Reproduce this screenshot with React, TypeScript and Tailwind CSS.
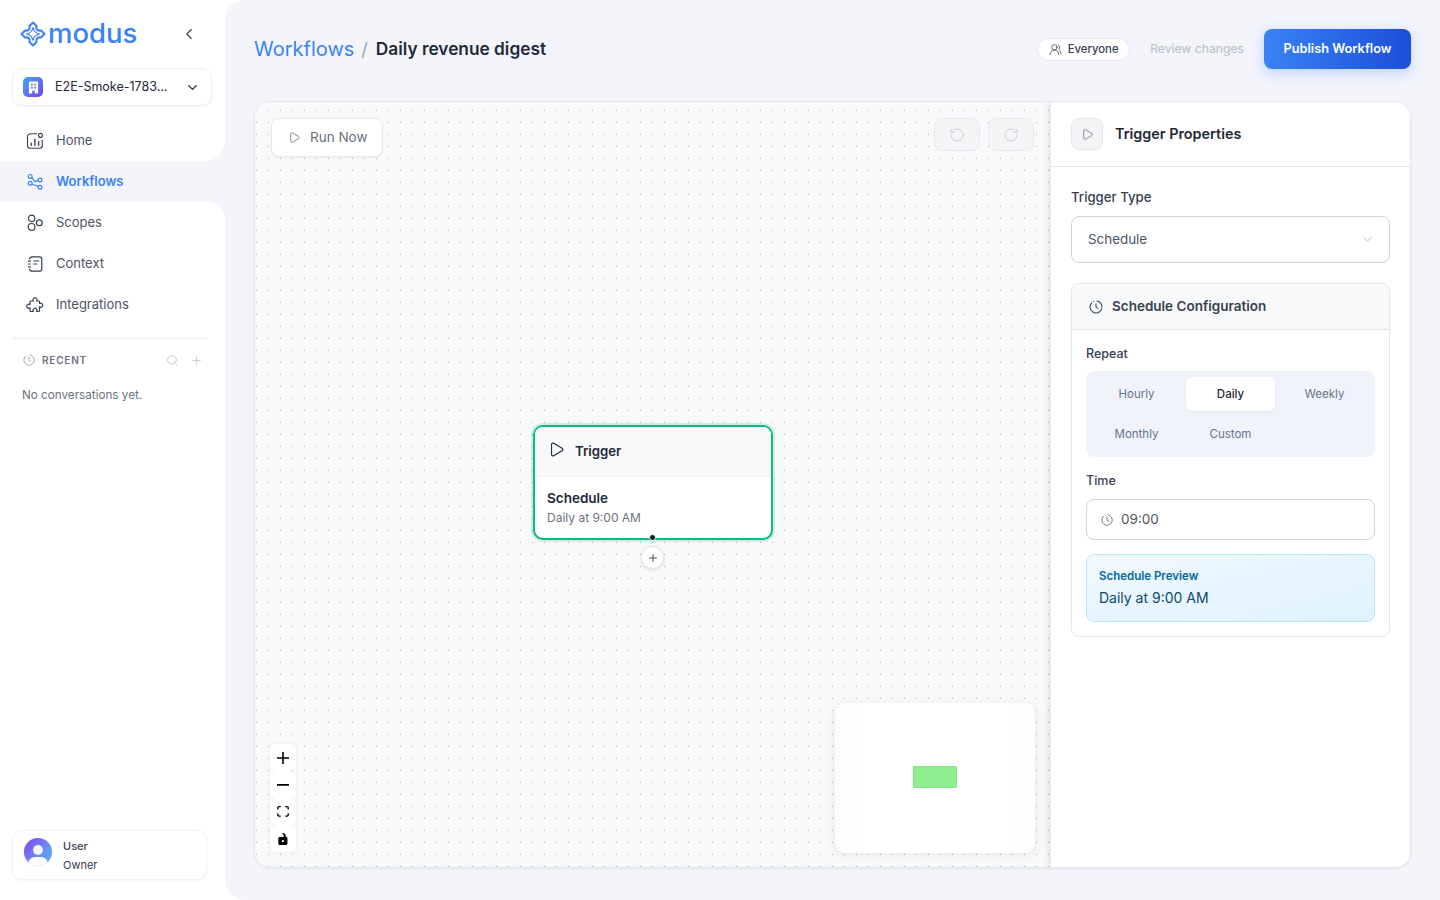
import { ChevronDown, ChevronLeft, Play, Plus, RotateCcw, RotateCw, Search, UsersRound } from "lucide-react";
import type { ReactNode } from "react";

function ClockMark({ className }: { className?: string }) {
  return (
    <svg viewBox="0 0 24 24" fill="none" stroke="currentColor" strokeWidth="1.6" strokeLinecap="round" strokeLinejoin="round" className={className}>
      <path d="M13.5 3.1A9 9 0 1 1 5.6 5.7" />
      <path d="M12 7v5.2l3 1.8" />
      <path d="M8.6 3.7l.1.1" />
    </svg>
  );
}

function ModusLogo() {
  return (
    <svg viewBox="0 0 26 26" fill="none" className="h-[26px] w-[26px] text-[#3b82f6]" stroke="currentColor" strokeLinejoin="round" strokeLinecap="round">
      <path d="M13 1.500L16.500 5Q15.600 10.400 21 9.500L24.500 13L21 16.500Q15.600 15.600 16.500 21L13 24.500L9.500 21Q10.400 15.600 5 16.500L1.500 13L5 9.500Q10.400 10.400 9.500 5Z" strokeWidth="2.100" />
      <path d="M13 6.500c.7 3.500 3 5.800 6.500 6.500-3.500.7-5.800 3-6.500 6.500-.7-3.500-3-5.800-6.500-6.500 3.500-.7 5.800-3 6.500-6.500z" strokeWidth="1.200" />
    </svg>
  );
}

function BuildingBadge() {
  return (
    <div className="flex h-5 w-5 items-center justify-center rounded-[5px] bg-gradient-to-br from-[#38a3f5] to-[#6d3df5]">
      <svg viewBox="0 0 12 14" className="h-[13px] w-[11px]">
        <path d="M1 1.5A1 1 0 0 1 2 .5h8a1 1 0 0 1 1 1v12H7.4v-3H4.6v3H1z" fill="#fff" />
        <rect x="3.2" y="2.8" width="2" height="2" fill="#6d7cf5" />
        <rect x="6.8" y="2.8" width="2" height="2" fill="#6d7cf5" />
        <rect x="3.2" y="6.2" width="2" height="2" fill="#6d7cf5" />
        <rect x="6.8" y="6.2" width="2" height="2" fill="#6d7cf5" />
      </svg>
    </div>
  );
}

function HomeIcon() {
  return (
    <svg viewBox="0 0 18 18" fill="none" stroke="currentColor" strokeWidth="1.1" strokeLinecap="round" className="h-[18px] w-[18px]">
      <path d="M10.5 1.800H4.200A2.700 2.700 0 0 0 1.500 4.500v9a2.700 2.700 0 0 0 2.700 2.700h9.400a2.700 2.700 0 0 0 2.700-2.700V8" />
      <circle cx="14.400" cy="3.400" r="2" />
      <path d="M5.200 13.200v-2M8.900 13.200V7.400M12.600 13.200V9.600" strokeWidth="1.400" />
    </svg>
  );
}

function FlowIcon() {
  return (
    <svg viewBox="0 0 18 18" fill="none" stroke="currentColor" strokeWidth="1.2" className="h-[18px] w-[18px]">
      <circle cx="4.200" cy="3.400" r="1.900" />
      <circle cx="4.200" cy="10.200" r="1.900" />
      <circle cx="14" cy="7" r="1.900" />
      <circle cx="14" cy="14.200" r="1.900" />
      <path d="M5.700 4.600l3.200 4.200 3.300-1.400M5.900 11l6.300 2.500" />
    </svg>
  );
}

function ScopesIcon() {
  return (
    <svg viewBox="0 0 18 18" fill="none" stroke="currentColor" strokeWidth="1.2" className="h-[18px] w-[18px]">
      <circle cx="5.600" cy="4.400" r="3.200" />
      <circle cx="5.600" cy="12.900" r="3.400" />
      <circle cx="13.300" cy="8.800" r="2.900" />
    </svg>
  );
}

function ContextIcon() {
  return (
    <svg viewBox="0 0 18 18" fill="none" stroke="currentColor" strokeWidth="1.2" strokeLinecap="round" className="h-[18px] w-[18px]">
      <path d="M3.600 3.900A2.400 2.400 0 0 1 6 1.800h7.400a2.400 2.400 0 0 1 2.400 2.400v9.600a2.400 2.400 0 0 1-2.400 2.400H6a2.400 2.400 0 0 1-2.400-2.100" />
      <path d="M2.400 6.200h2M2.400 9h2M2.400 11.800h2M7.800 6h5M7.800 9h3" />
    </svg>
  );
}

function PuzzleIcon() {
  return (
    <svg viewBox="0 0 18 18" fill="none" stroke="currentColor" strokeWidth="1.2" strokeLinejoin="round" className="h-[18px] w-[18px]">
      <path d="M4.800 5H7.400a2 2 0 1 1 3.200 0H12.700a.8.8 0 0 1 .8.8V7.600a2 2 0 1 1 0 3.200V14.700a.8.8 0 0 1-.8.8H10.600a2 2 0 1 0-3.200 0H4.800a.8.8 0 0 1-.8-.8V11.800a2 2 0 1 1 0-3.200V5.800a.8.8 0 0 1 .8-.8z" />
    </svg>
  );
}

function NavItem({ icon, label, active }: { icon: ReactNode; label: string; active?: boolean }) {
  return (
    <div className={`flex h-[41px] items-center gap-[12px] pl-[26px] text-[13px] ${active ? "font-semibold text-[#3b82f6]" : "text-[#4b5563]"}`}>
      <span className={active ? "text-[#3b82f6]" : "text-[#374151]"}>{icon}</span>
      {label}
    </div>
  );
}

function Sidebar() {
  return (
    <aside className="flex h-full w-[225px] shrink-0 flex-col">
      <div className="h-[161px] rounded-br-[20px] bg-white">
        <div className="flex h-[68px] items-center justify-between pl-[20px] pr-[27px]">
          <div className="flex items-center gap-[2px]">
            <ModusLogo />
            <span className="pb-[1px] text-[27.500px] leading-none font-medium text-[#3b82f6]">modus</span>
          </div>
          <ChevronLeft className="h-[18px] w-[18px] text-[#374151]" strokeWidth={1.5} />
        </div>
        <div className="mx-[12px] flex h-[38px] w-[200px] items-center rounded-[10px] border border-[#eef0f7] bg-white pl-[10px] pr-[11px] shadow-[0_1px_2px_rgba(17,24,39,0.04)]">
          <BuildingBadge />
          <span className="ml-[12px] flex-1 text-[12.500px] text-[#1f2937]">E2E-Smoke-1783...</span>
          <ChevronDown className="h-[15px] w-[15px] text-[#1f2937]" strokeWidth={2} />
        </div>
        <div className="mt-[14px]">
          <NavItem icon={<HomeIcon />} label="Home" />
        </div>
      </div>
      <div className="h-[40px]">
        <NavItem icon={<FlowIcon />} label="Workflows" active />
      </div>
      <div className="flex flex-1 flex-col rounded-tr-[20px] bg-white pb-[20px]">
        <div className="flex-none pt-[1px]">
          <NavItem icon={<ScopesIcon />} label="Scopes" />
          <NavItem icon={<ContextIcon />} label="Context" />
          <NavItem icon={<PuzzleIcon />} label="Integrations" />
        </div>
        <div className="mx-[12px] mt-[13px] w-[196px] border-t border-[#e9ebf1]" />
        <div className="flex h-[42px] items-center pl-[22px] pr-[22px]">
          <ClockMark className="h-[14px] w-[14px] text-[#9ca3af]" />
          <span className="ml-[6px] flex-1 text-[10px] font-semibold tracking-[0.8px] text-[#6b7280]">RECENT</span>
          <Search className="h-[13px] w-[13px] text-[#c0c4cc]" strokeWidth={1.5} />
          <Plus className="ml-[11px] h-[13px] w-[13px] text-[#c0c4cc]" strokeWidth={1.5} />
        </div>
        <p className="mt-[6px] pl-[22px] text-[11.700px] text-[#6b7280]">No conversations yet.</p>
        <div className="mx-[12px] mt-auto flex h-[50px] w-[195px] items-center rounded-[10px] border border-[#f0f1f7] bg-white pl-[11px] shadow-[0_1px_2px_rgba(17,24,39,0.04)]">
          <div className="relative mb-[6px] h-[28px] w-[28px] overflow-hidden rounded-full bg-gradient-to-br from-[#7c3aed] to-[#38bdf8]">
            <div className="absolute left-[9px] top-[7px] h-[10px] w-[10px] rounded-full bg-white/90" />
            <div className="absolute left-[4px] top-[19px] h-[14px] w-[20px] rounded-full bg-white" />
          </div>
          <div className="ml-[11px] mt-[2px] text-[11px] leading-[19px] text-[#374151]">
            <div className="font-medium">User</div>
            <div>Owner</div>
          </div>
        </div>
      </div>
    </aside>
  );
}

function Header() {
  return (
    <header className="flex h-[40px] items-center justify-between">
      <div className="flex items-center">
        <span className="text-[20px] text-[#3b82f6]">Workflows</span>
        <span className="ml-[7px] mr-[8px] text-[18px] text-[#9ca3af]">/</span>
        <span className="text-[17.300px] font-semibold text-[#1f2937]">Daily revenue digest</span>
      </div>
      <div className="flex items-center">
        <div className="flex h-[23px] w-[93px] items-center justify-center gap-[6px] rounded-full border border-[#e5e7eb] bg-white pt-[1px] text-[11.300px] font-medium text-[#374151]">
          <UsersRound className="h-[13px] w-[13px]" strokeWidth={1.4} />
          Everyone
        </div>
        <span className="ml-[20px] mr-[20px] text-[12.200px] text-[#b8bcc6]">Review changes</span>
        <button className="h-[40px] w-[147px] rounded-[8px] bg-gradient-to-r from-[#3b82f6] to-[#1d4ed8] text-[12.750px] font-semibold text-white shadow-[0_4px_14px_rgba(59,130,246,0.3)]">
          Publish Workflow
        </button>
      </div>
    </header>
  );
}

function ZoomButton({ children }: { children: ReactNode }) {
  return <div className="flex h-[27px] w-[26px] items-center justify-center rounded-[8px] bg-white">{children}</div>;
}

function Canvas() {
  return (
    <div className="relative flex-1 bg-[#f8f9fb] bg-[radial-gradient(circle_at_0.5px_0.5px,#a8abb3_0.5px,transparent_0.6px)] bg-[size:12px_12px] bg-[position:1px_8px]">
      <button className="absolute left-[16px] top-[16px] flex h-[39px] w-[112px] items-center gap-[9px] rounded-[8px] border border-[#e5e7eb] bg-white pl-[16px] text-[13.500px] text-[#6b7280] shadow-[0_1px_2px_rgba(17,24,39,0.05)]">
        <Play className="h-[13px] w-[13px] text-[#6b7280]" strokeWidth={1.5} />
        Run Now
      </button>

      <div className="absolute right-[16px] top-[16px] flex gap-[8px]">
        <div className="flex h-[33px] w-[46px] items-center justify-center rounded-[8px] border border-[#e8e9ee] bg-[#f3f4f6]/80 text-[#c9ccd3]">
          <RotateCcw className="h-[16px] w-[16px]" strokeWidth={1.5} />
        </div>
        <div className="flex h-[33px] w-[46px] items-center justify-center rounded-[8px] border border-[#e8e9ee] bg-[#f3f4f6]/80 text-[#c9ccd3]">
          <RotateCw className="h-[16px] w-[16px]" strokeWidth={1.5} />
        </div>
      </div>

      {/* trigger node */}
      <div className="absolute left-[278px] top-[323px] h-[115px] w-[240px] overflow-hidden rounded-[10px] border-2 border-[#10b981] bg-white shadow-[0_0_0_2px_rgba(16,185,129,0.18)]">
        <div className="flex h-[50px] items-center gap-[10px] border-b border-[#f0f1f4] bg-[#f8f9fb] pl-[13px] text-[13.200px] font-semibold text-[#1f2937]">
          <Play className="mb-[4px] h-[17px] w-[17px]" strokeWidth={1.6} />
          Trigger
        </div>
        <div className="pl-[12px] pt-[12px]">
          <div className="text-[13.500px] leading-[18px] font-semibold text-[#1f2937]">Schedule</div>
          <div className="mt-[3px] text-[12px] leading-[16px] text-[#6b7280]">Daily at 9:00 AM</div>
        </div>
      </div>
      <div className="absolute left-[394px] top-[432px] h-[7px] w-[7px] rounded-full border border-white bg-[#111827]" />
      <div className="absolute left-[386px] top-[444px] flex h-[23px] w-[23px] items-center justify-center rounded-full border border-[#e5e7eb] bg-white shadow-[0_1px_3px_rgba(17,24,39,0.12)]">
        <Plus className="h-[12px] w-[12px] text-[#1f2937]" strokeWidth={1.6} />
      </div>

      {/* zoom controls */}
      <div className="absolute bottom-[15px] left-[15px] flex flex-col shadow-[0_0_2px_1px_rgba(0,0,0,0.04)]">
        <ZoomButton>
          <svg viewBox="0 0 32 32" className="h-[12px] w-[12px]"><path d="M32 18.133H18.133V32h-4.266V18.133H0v-4.266h13.867V0h4.266v13.867H32z" /></svg>
        </ZoomButton>
        <ZoomButton>
          <svg viewBox="0 0 32 5" className="h-[2px] w-[12px]"><path d="M0 0h32v4.2H0z" /></svg>
        </ZoomButton>
        <ZoomButton>
          <svg viewBox="0 0 32 30" className="h-[11px] w-[12px]"><path d="M3.692 4.63c0-.53.4-.938.939-.938h5.215V0H4.708C2.13 0 0 2.054 0 4.63v5.216h3.692V4.631zM27.354 0h-5.2v3.692h5.17c.53 0 .984.4.984.939v5.215H32V4.631A4.624 4.624 0 0027.354 0zm.954 24.83c0 .532-.4.94-.939.94h-5.215v3.768h5.215c2.577 0 4.631-2.13 4.631-4.707v-5.139h-3.692v5.139zm-23.677.94c-.531 0-.939-.4-.939-.94v-5.138H0v5.139c0 2.577 2.13 4.707 4.708 4.707h5.138V25.77H4.631z" /></svg>
        </ZoomButton>
        <ZoomButton>
          <svg viewBox="0 0 25 32" className="h-[12px] w-[10px]"><path d="M21.333 10.667H19.81V7.619C19.81 3.429 16.38 0 12.19 0c-4.114 1.828-1.37 2.133-.305 2.438 1.066.305 2.438 1.676 2.438 2.743v5.485H3.048A3.056 3.056 0 000 13.714v15.238A3.056 3.056 0 003.048 32h18.285a3.056 3.056 0 003.048-3.048V13.714a3.056 3.056 0 00-3.048-3.047zM12.19 24.533a3.056 3.056 0 01-3.047-3.047 3.056 3.056 0 013.047-3.048 3.056 3.056 0 013.048 3.048 3.056 3.056 0 01-3.048 3.047z" /></svg>
        </ZoomButton>
      </div>

      {/* minimap */}
      <div className="absolute bottom-[14px] right-[15px] h-[150px] w-[200px] overflow-hidden rounded-[10px] bg-[#fdfdfd] shadow-[0_2px_10px_rgba(17,24,39,0.08)]">
        <div className="absolute inset-y-0 left-[27px] w-[146px] bg-white" />
        <div className="absolute left-[78px] top-[63px] h-[22px] w-[44px] rounded-[1px] border border-[#7fe97f] bg-[#90ee90]" />
      </div>
    </div>
  );
}

function PropertiesPanel() {
  return (
    <div className="relative z-10 flex w-[360px] shrink-0 flex-col border-l border-[#e5e7ef] bg-white shadow-[-3px_0_6px_rgba(17,24,39,0.07)]">
      <div className="flex h-[65px] items-center gap-[12px] border-b border-[#e5e7eb] pl-[20px]">
        <div className="flex h-[32px] w-[32px] items-center justify-center rounded-[8px] border border-[#e5e7eb] bg-[#f3f4f6]">
          <Play className="h-[13px] w-[13px] text-[#6b7280]" strokeWidth={1.5} />
        </div>
        <span className="text-[14.400px] font-semibold text-[#1f2937]">Trigger Properties</span>
      </div>
      <div className="pl-[20px] pr-[20px] pt-[21px]">
        <div className="text-[13.200px] leading-[18px] font-medium text-[#374151]">Trigger Type</div>
        <div className="mt-[10px] flex h-[47px] items-center justify-between rounded-[8px] border border-[#d1d5db] pl-[16px] pr-[15px] text-[13.400px] text-[#4b5563]">
          Schedule
          <ChevronDown className="h-[13px] w-[13px] text-[#9ca3af]" strokeWidth={1.4} />
        </div>
        <div className="mt-[20px] h-[354px] overflow-hidden rounded-[8px] border border-[#e5e7eb]">
          <div className="flex h-[46px] items-center gap-[8px] border-b border-[#e5e7eb] bg-[#f8f9fb] pl-[16px] text-[13.500px] font-semibold text-[#374151]">
            <ClockMark className="h-[16px] w-[16px]" />
            Schedule Configuration
          </div>
          <div className="px-[14px] pt-[16px]">
            <div className="text-[12.500px] leading-[16px] font-medium text-[#374151]">Repeat</div>
            <div className="mt-[9px] grid h-[86px] grid-cols-3 gap-x-[5px] gap-y-[6px] rounded-[8px] bg-[#f0f3f9] p-[6px] text-[11.500px] text-[#64748b]">
              <div className="flex items-center justify-center pt-[1px]">Hourly</div>
              <div className="flex items-center justify-center rounded-[6px] bg-white pt-[1px] font-medium text-[#1f2937] shadow-[0_1px_2px_rgba(17,24,39,0.08)]">Daily</div>
              <div className="flex items-center justify-center pt-[1px]">Weekly</div>
              <div className="flex items-center justify-center pt-[1px]">Monthly</div>
              <div className="flex items-center justify-center pt-[1px]">Custom</div>
            </div>
            <div className="mt-[16px] text-[12.500px] leading-[16px] font-medium text-[#374151]">Time</div>
            <div className="mt-[10px] flex h-[41px] items-center gap-[7px] rounded-[8px] border border-[#d1d5db] pl-[13px] text-[13.500px] text-[#4b5563]">
              <ClockMark className="h-[14px] w-[14px] text-[#6b7280]" />
              09:00
            </div>
            <div className="mt-[14px] h-[68px] rounded-[8px] border border-[#bae6fd] bg-gradient-to-br from-[#f0f9ff] to-[#e0f2fe] pl-[12px] pt-[13px]">
              <div className="text-[11.500px] leading-[16px] font-semibold text-[#0369a1]">Schedule Preview</div>
              <div className="mt-[4px] text-[14px] leading-[20px] text-[#0c4a6e]">Daily at 9:00 AM</div>
            </div>
          </div>
        </div>
      </div>
    </div>
  );
}

export default function App() {
  return (
    <div className="flex h-[900px] w-[1440px] overflow-hidden bg-white font-['Inter',sans-serif]">
      <div className="h-full w-[225px] shrink-0 bg-[#f3f5fb]">
        <Sidebar />
      </div>
      <main className="flex flex-1 flex-col rounded-l-[20px] bg-[#f3f5fb] pb-[32px] pl-[29px] pr-[29px] pt-[29px]">
        <Header />
        <div className="mt-[32px] flex flex-1 overflow-hidden rounded-[16px] border border-[#e5e7ef] bg-white shadow-[0_1px_3px_rgba(17,24,39,0.06)]">
          <Canvas />
          <PropertiesPanel />
        </div>
      </main>
    </div>
  );
}
